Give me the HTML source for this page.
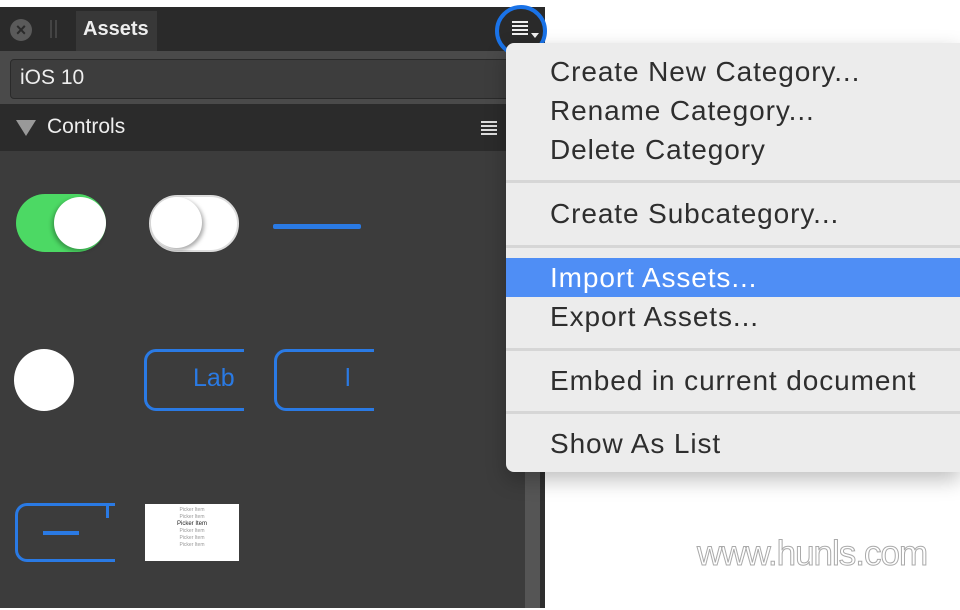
<!DOCTYPE html>
<html><head><meta charset="utf-8"><style>
*{margin:0;padding:0;box-sizing:border-box}
body{width:960px;height:610px;background:#fff;position:relative;overflow:hidden;font-family:"Liberation Sans",sans-serif}
.a{position:absolute}
.mi{position:absolute;left:44px;font-size:28px;letter-spacing:0.9px;color:#2e2e2e;line-height:39px;white-space:nowrap}
.sep{position:absolute;left:0;right:0;height:3px;background:#d6d6d6}
</style></head><body>
<div class="a" style="left:0;top:7px;width:545px;height:601px;background:#3c3c3c"></div>
<div class="a" style="left:0;top:7px;width:545px;height:44px;background:#2a2a2a"></div>
<div class="a" style="left:10px;top:19px;width:22px;height:22px;border-radius:50%;background:#5a5a5a;color:#2a2a2a;font-size:18px;line-height:22px;text-align:center;font-weight:bold">×</div>
<div class="a" style="left:50px;top:20px;width:2px;height:18px;background:#444"></div>
<div class="a" style="left:55px;top:20px;width:2px;height:18px;background:#444"></div>
<div class="a" style="left:76px;top:11px;width:81px;height:40px;background:#383838"></div>
<div class="a" style="left:83px;top:18px;color:#eee;font-size:20px;font-weight:bold">Assets</div>
<div class="a" style="left:0;top:51px;width:545px;height:53px;background:#4a4a4a"></div>
<div class="a" style="left:10px;top:59px;width:520px;height:40px;background:#3d3d3d;border:1px solid #2a2a2a;border-radius:4px"></div>
<div class="a" style="left:20px;top:66px;color:#eee;font-size:21px">iOS 10</div>
<div class="a" style="left:0;top:104px;width:545px;height:47px;background:#2b2b2b"></div>
<div class="a" style="left:16px;top:120px;width:0;height:0;border-left:10px solid transparent;border-right:10px solid transparent;border-top:16px solid #999"></div>
<div class="a" style="left:47px;top:115px;color:#eee;font-size:21px">Controls</div>
<div class="a" style="left:481px;top:121px;width:16px;height:14px;background:repeating-linear-gradient(#ddd 0 2px,transparent 2px 4px)"></div>
<div class="a" style="left:525px;top:151px;width:15px;height:457px;background:#555"></div>
<div class="a" style="left:540px;top:151px;width:5px;height:457px;background:#2e2e2e"></div>
<div class="a" style="left:16px;top:194px;width:90px;height:58px;border-radius:29px;background:#4cd964"></div>
<div class="a" style="left:54px;top:197px;width:52px;height:52px;border-radius:50%;background:#fff;box-shadow:-2px 2px 4px rgba(0,0,0,.3)"></div>
<div class="a" style="left:149px;top:195px;width:90px;height:57px;border-radius:29px;background:#fff;border:2px solid #ddd"></div>
<div class="a" style="left:151px;top:197px;width:51px;height:51px;border-radius:50%;background:#fff;box-shadow:2px 2px 4px rgba(0,0,0,.35)"></div>
<div class="a" style="left:273px;top:224px;width:88px;height:5px;background:#2a7ae4;border-radius:2px"></div>
<div class="a" style="left:14px;top:349px;width:60px;height:62px;border-radius:50%;background:#fff"></div>
<div class="a" style="left:144px;top:349px;width:100px;height:62px;border:3px solid #2a7ae4;border-right:none;border-radius:12px 0 0 12px"></div>
<div class="a" style="left:193px;top:364px;color:#2a7ae4;font-size:25px">Lab</div>
<div class="a" style="left:274px;top:349px;width:100px;height:62px;border:3px solid #2a7ae4;border-right:none;border-radius:12px 0 0 12px"></div>
<div class="a" style="left:345px;top:364px;color:#2a7ae4;font-size:25px">l</div>
<div class="a" style="left:15px;top:503px;width:100px;height:59px;border:3px solid #2a7ae4;border-right:none;border-radius:12px 0 0 12px"></div>
<div class="a" style="left:106px;top:503px;width:3px;height:15px;background:#2a7ae4"></div>
<div class="a" style="left:43px;top:531px;width:36px;height:4px;background:#2a7ae4"></div>
<div class="a" style="left:145px;top:504px;width:94px;height:57px;background:#fff;font-size:5px;color:#999;text-align:center;line-height:7px;padding-top:3px">Picker Item<br>Picker Item<br><span style="color:#222;font-size:6px">Picker Item</span><br>Picker Item<br>Picker Item<br>Picker Item</div>
<div class="a" style="left:512px;top:21px;width:16px;height:14px;background:repeating-linear-gradient(#eee 0 2px,transparent 2px 4px)"></div>
<div class="a" style="left:531px;top:33px;width:0;height:0;border-left:4px solid transparent;border-right:4px solid transparent;border-top:5px solid #eee"></div>
<div class="a" style="left:495px;top:5px;width:52px;height:52px;border-radius:50%;border:4px solid #1a73e8"></div>
<div class="a" style="left:506px;top:43px;width:454px;height:429px;background:#ececec;border-radius:8px 0 0 8px;box-shadow:0 8px 20px rgba(0,0,0,.25)">
<div class="mi" style="top:9px">Create New Category...</div>
<div class="mi" style="top:48px">Rename Category...</div>
<div class="mi" style="top:87px">Delete Category</div>
<div class="sep" style="top:137px"></div>
<div class="mi" style="top:151px">Create Subcategory...</div>
<div class="sep" style="top:202px"></div>
<div class="a" style="left:0;right:0;top:215px;height:39px;background:#4f8ef5"></div>
<div class="mi" style="top:215px;color:#fff">Import Assets...</div>
<div class="mi" style="top:254px">Export Assets...</div>
<div class="sep" style="top:305px"></div>
<div class="mi" style="top:318px">Embed in current document</div>
<div class="sep" style="top:368px"></div>
<div class="mi" style="top:381px">Show As List</div>
</div>
<div class="a" style="left:697px;top:534px;font-size:35px;color:#fff;-webkit-text-stroke:1px #aaa;letter-spacing:-1px">www.hunls.com</div>
</body></html>
